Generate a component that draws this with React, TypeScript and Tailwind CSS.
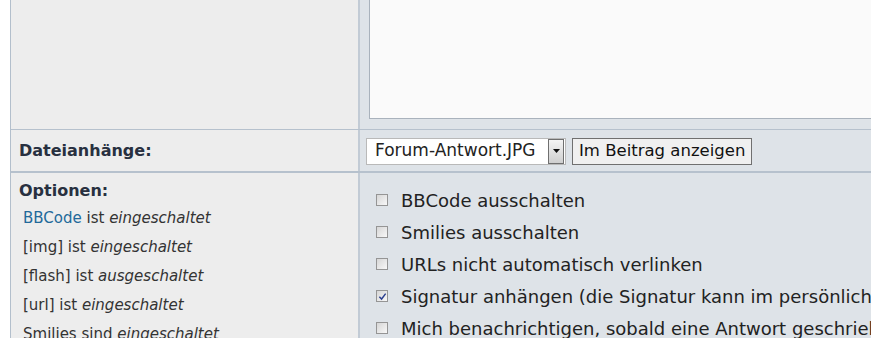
import React from 'react';

// Forum reply form: attachments + options rows

const font = 'font-["DejaVu_Sans",Verdana,sans-serif]';

function Checkbox({ checked = false }: { checked?: boolean }) {
  return (
    <span className="inline-flex h-[12px] w-[12px] shrink-0 items-center justify-center border border-[#959595] bg-gradient-to-br from-[#d6d6d6] to-[#f8f8f8]">
      {checked && (
        <svg viewBox="0 0 10 10" className="h-[9px] w-[9px]">
          <path d="M1.5 5.2 L4 7.8 L8.5 1.8" fill="none" stroke="#2b3f8f" strokeWidth="1.6" />
        </svg>
      )}
    </span>
  );
}

const status = [
  { pre: 'BBCode', link: true, mid: ' ist ', state: 'eingeschaltet' },
  { pre: '[img]', mid: ' ist ', state: 'eingeschaltet' },
  { pre: '[flash]', mid: ' ist ', state: 'ausgeschaltet' },
  { pre: '[url]', mid: ' ist ', state: 'eingeschaltet' },
  { pre: 'Smilies', mid: ' sind ', state: 'eingeschaltet' },
];

const options = [
  { label: 'BBCode ausschalten' },
  { label: 'Smilies ausschalten' },
  { label: 'URLs nicht automatisch verlinken' },
  { label: 'Signatur anhängen (die Signatur kann im persönlichen Kontrollzentrum geändert werden)', checked: true },
  { label: 'Mich benachrichtigen, sobald eine Antwort geschrieben wurde' },
];

export default function App() {
  return (
    <div className={`${font} h-[338px] w-[871px] overflow-hidden bg-white text-[#2b2b2b]`}>
      <div className="ml-[10px] border-l border-[#b3bfcc]">
        {/* Message row (textarea bottom) */}
        <div className="flex h-[130px] border-b border-[#b6c1cd]">
          <div className="w-[349px] shrink-0 border-r-2 border-[#c2cbd5] bg-[#ededed]" />
          <div className="flex-1 overflow-hidden bg-[#dee3e8] pl-[9px]">
            <div className="h-[119px] w-[700px] border-x border-b border-[#a9b2bc] bg-[#fafafa]" />
          </div>
        </div>

        {/* Attachments row */}
        <div className="flex h-[43px] border-b-2 border-[#b6c1cd]">
          <div className="flex w-[349px] shrink-0 items-center border-r-2 border-[#c2cbd5] bg-[#ededed] pl-[8px]">
            <span className="text-[16px] font-bold text-[#283040]">Dateianhänge:</span>
          </div>
          <div className="flex flex-1 items-center gap-[6px] bg-[#dee3e8] pl-[6px] pt-[1px]">
            <div className="flex h-[27px] w-[200px] items-center border border-[#b9b9b9] bg-white">
              <span className="flex-1 whitespace-nowrap pl-[8px] text-[17px] text-[#222]">Forum-Antwort.JPG</span>
              <span className="mr-[1px] flex h-[25px] w-[16px] shrink-0 items-center justify-center border border-[#6f6f6f] bg-gradient-to-b from-[#f4f4f4] to-[#cfcfcf]">
                <svg viewBox="0 0 7 4" className="h-[4px] w-[7px]">
                  <path d="M0 0 H7 L3.5 4 Z" fill="#111" />
                </svg>
              </span>
            </div>
            <button className="h-[27px] whitespace-nowrap border border-[#707070] bg-[#f0f0f0] px-[6px] text-[16.5px] text-[#111]">
              Im Beitrag anzeigen
            </button>
          </div>
        </div>

        {/* Options row */}
        <div className="flex h-[170px]">
          <div className="w-[349px] shrink-0 border-r-2 border-[#c2cbd5] bg-[#ededed] pl-[8px] pt-[8px]">
            <div className="text-[16px] font-bold leading-[20px] text-[#283040]">Optionen:</div>
            <ul className="mt-[3px] pl-[4px] text-[15px] leading-[29px] text-[#333]">
              {status.map((s) => (
                <li key={s.pre} className="whitespace-nowrap">
                  <span className={s.link ? 'text-[#22699a]' : ''}>{s.pre}</span>
                  {s.mid}
                  <em>{s.state}</em>
                </li>
              ))}
            </ul>
          </div>
          <div className="flex-1 overflow-hidden bg-[#dee3e8] pl-[16px] pt-[11px]">
            {options.map((o) => (
              <label key={o.label} className="flex h-[32px] items-center gap-[13px] whitespace-nowrap text-[18px] text-[#222]">
                <Checkbox checked={o.checked} />
                <span>{o.label}</span>
              </label>
            ))}
          </div>
        </div>
      </div>
    </div>
  );
}
